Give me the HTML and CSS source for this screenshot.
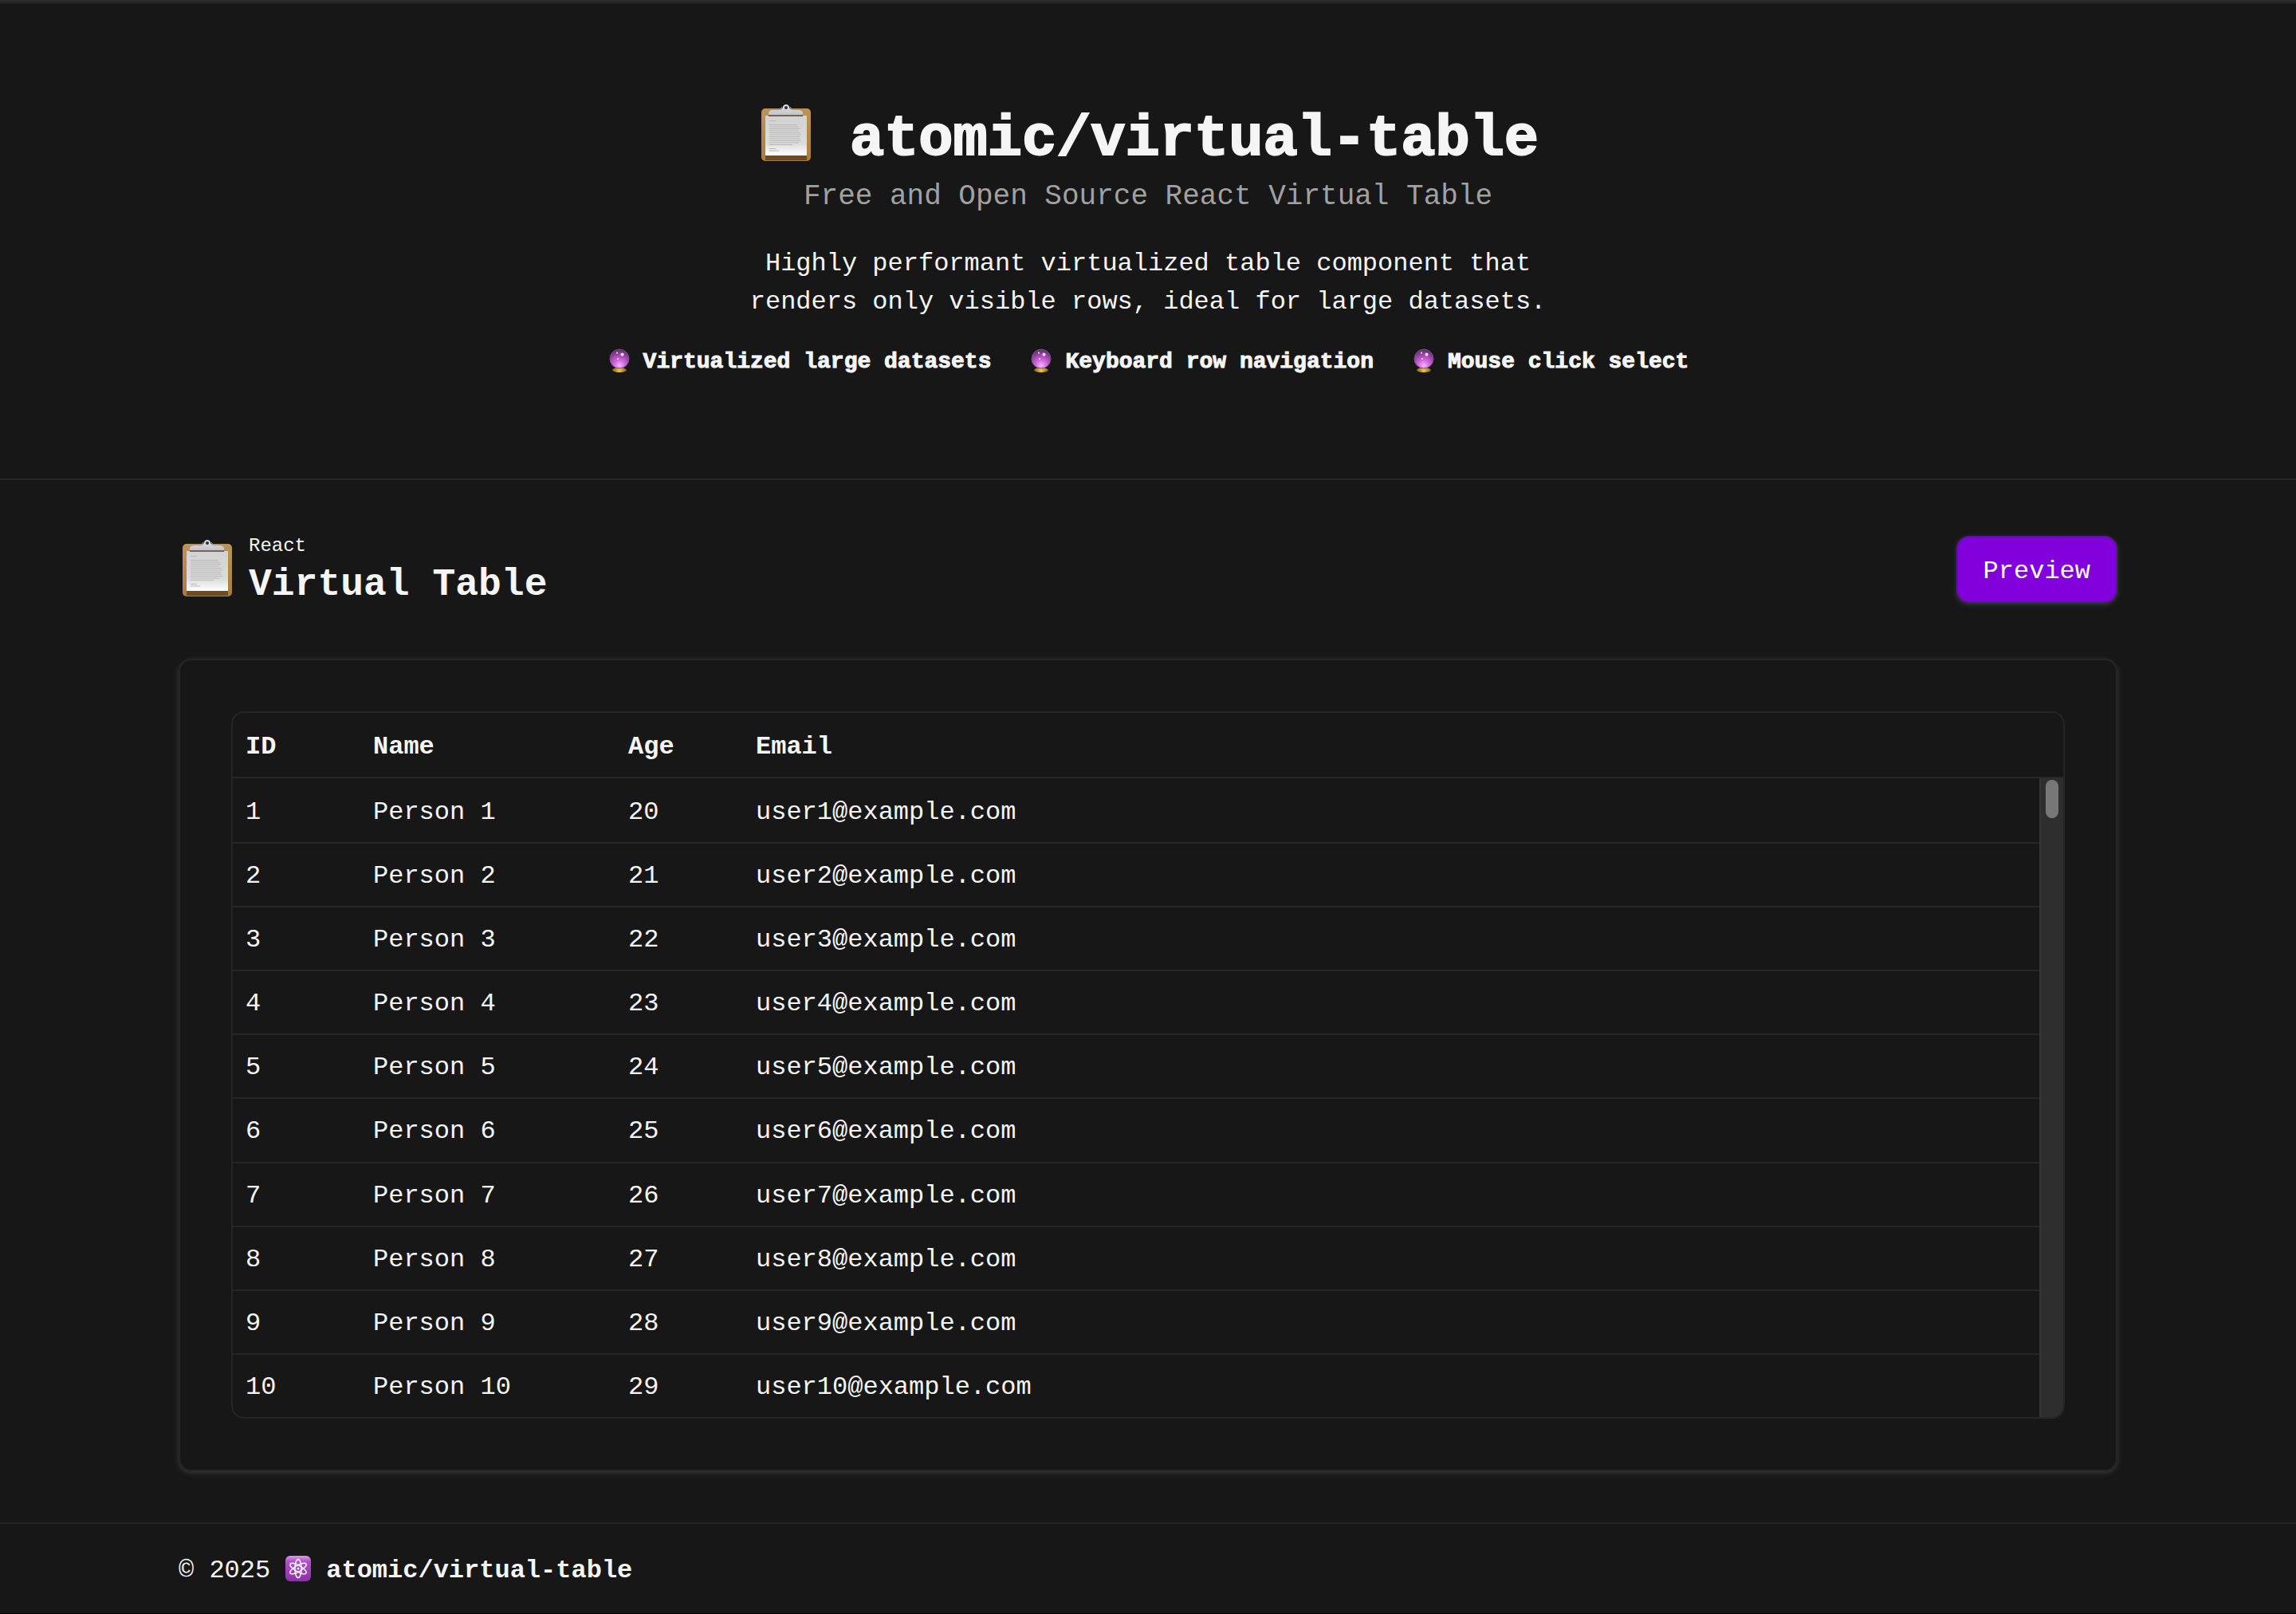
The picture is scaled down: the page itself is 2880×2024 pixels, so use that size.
FILE: index.html
```html
<!DOCTYPE html>
<html lang="en">
<head>
<meta charset="utf-8">
<title>atomic/virtual-table</title>
<link rel="stylesheet" href="styles.css">
</head>
<body>
<svg class="defs" width="0" height="0" aria-hidden="true">
  <defs>
    <linearGradient id="board" x1="0" y1="0" x2="0" y2="1"><stop offset="0" stop-color="#bd9357"/><stop offset="1" stop-color="#a97c3e"/></linearGradient>
    <linearGradient id="paper" x1="0" y1="0" x2="0" y2="1"><stop offset="0" stop-color="#d2d2d2"/><stop offset="0.7" stop-color="#dcdcdc"/><stop offset="1" stop-color="#ffffff"/></linearGradient>
    <linearGradient id="clip" x1="0" y1="0" x2="0" y2="1"><stop offset="0" stop-color="#dfe3e8"/><stop offset="1" stop-color="#c2c4c7"/></linearGradient>
    <radialGradient id="ball" cx="0.5" cy="0.85" r="0.85"><stop offset="0" stop-color="#f6b4fb"/><stop offset="0.35" stop-color="#cf66dc"/><stop offset="0.75" stop-color="#8e3c9c"/><stop offset="1" stop-color="#5b2a66"/></radialGradient>
    <linearGradient id="gold" x1="0" y1="0" x2="1" y2="0"><stop offset="0" stop-color="#8a5d12"/><stop offset="0.5" stop-color="#f0c648"/><stop offset="1" stop-color="#8a5d12"/></linearGradient>
    <linearGradient id="tile" x1="0" y1="0" x2="0" y2="1"><stop offset="0" stop-color="#dd9cec"/><stop offset="0.22" stop-color="#b24fcb"/><stop offset="1" stop-color="#8d2fa9"/></linearGradient>
    <symbol id="clipboard" viewBox="0 0 72 80">
      <rect x="5" y="11" width="62" height="66" rx="5" fill="url(#board)"/>
      <path d="M10 70h52v6H10z" fill="#6f4b21"/>
      <path d="M10 20h52v50H10z" fill="url(#paper)"/>
      <g stroke="#b9b9b9" stroke-width="1"><path d="M15 26.500h8M15 31.500h35M15 34h37M15 36.500h38M15 39h36M15 41.500h39M15 44h40M15 46.500h38M15 49h39M15 51.500h40M15 54h37M15 56.500h29M15 61.500h8M15 64h12"/></g>
      <path d="M14 18h43v3H14z" fill="#74655c"/>
      <path d="M14 19v-2q0-4 6-4h8q3 0 4-4 1-3 4-3t4 3q1 4 4 4h7q6 0 6 4v2z" fill="url(#clip)"/>
      <path d="M26 13q4-1 5-4M46 13q-4-1-5-4" fill="none" stroke="#8ea9c9" stroke-width="1"/>
      <circle cx="36" cy="10" r="2" fill="#303236"/>
    </symbol>
    <symbol id="crystal" viewBox="0 0 28 32">
      <ellipse cx="15" cy="28" rx="9" ry="3" fill="url(#gold)"/>
      <circle cx="15" cy="14" r="12" fill="url(#ball)" stroke="#6f5578" stroke-width="1"/>
      <circle cx="18.500" cy="8.500" r="2" fill="#fff" opacity="0.9"/>
      <circle cx="12" cy="6.500" r="1" fill="#fff"/>
      <circle cx="13" cy="14" r="1" fill="#fbdcff"/>
    </symbol>
    <symbol id="atom" viewBox="0 0 32 32">
      <rect width="32" height="32" rx="6" fill="url(#tile)"/>
      <g fill="none" stroke="#fff" stroke-width="1.500"><ellipse cx="16" cy="16" rx="4" ry="11.500"/><ellipse cx="16" cy="16" rx="4" ry="11.500" transform="rotate(60 16 16)"/><ellipse cx="16" cy="16" rx="4" ry="11.500" transform="rotate(120 16 16)"/></g>
      <circle cx="16" cy="16" r="1.500" fill="#fff"/>
    </symbol>
  </defs>
</svg>

<header class="hero">
  <h1 class="hero-title"><svg class="icon-board" aria-hidden="true"><use href="#clipboard"/></svg> <span>atomic/virtual-table</span></h1>
  <p class="hero-subtitle">Free and Open Source React Virtual Table</p>
  <p class="hero-text">Highly performant virtualized table component that renders only visible rows, ideal for large datasets.</p>
  <ul class="features">
    <li class="feature"><svg class="icon-ball" aria-hidden="true"><use href="#crystal"/></svg>Virtualized large datasets</li>
    <li class="feature"><svg class="icon-ball" aria-hidden="true"><use href="#crystal"/></svg>Keyboard row navigation</li>
    <li class="feature"><svg class="icon-ball" aria-hidden="true"><use href="#crystal"/></svg>Mouse click select</li>
  </ul>
</header>

<main class="container">
  <div class="section-head">
    <svg class="icon-board" aria-hidden="true"><use href="#clipboard"/></svg>
    <div class="section-titles">
      <p class="section-kicker">React</p>
      <h2 class="section-title">Virtual Table</h2>
    </div>
    <button class="button" type="button">Preview</button>
  </div>

  <section class="card">
    <div class="table-frame">
      <table class="table">
        <thead class="table-head">
          <tr class="row"><th>ID</th><th>Name</th><th>Age</th><th>Email</th></tr>
        </thead>
        <tbody class="table-body">
          <tr class="row"><td>1</td><td>Person 1</td><td>20</td><td>user1@example.com</td></tr>
          <tr class="row"><td>2</td><td>Person 2</td><td>21</td><td>user2@example.com</td></tr>
          <tr class="row"><td>3</td><td>Person 3</td><td>22</td><td>user3@example.com</td></tr>
          <tr class="row"><td>4</td><td>Person 4</td><td>23</td><td>user4@example.com</td></tr>
          <tr class="row"><td>5</td><td>Person 5</td><td>24</td><td>user5@example.com</td></tr>
          <tr class="row"><td>6</td><td>Person 6</td><td>25</td><td>user6@example.com</td></tr>
          <tr class="row"><td>7</td><td>Person 7</td><td>26</td><td>user7@example.com</td></tr>
          <tr class="row"><td>8</td><td>Person 8</td><td>27</td><td>user8@example.com</td></tr>
          <tr class="row"><td>9</td><td>Person 9</td><td>28</td><td>user9@example.com</td></tr>
          <tr class="row"><td>10</td><td>Person 10</td><td>29</td><td>user10@example.com</td></tr>
        </tbody>
      </table>
      <div class="scrollbar"><div class="scrollbar-thumb"></div></div>
    </div>
  </section>
</main>

<footer class="footer">
  <div class="container footer-line">
    <span>© 2025</span>
    <svg class="icon-atom" aria-hidden="true"><use href="#atom"/></svg>
    <strong>atomic/virtual-table</strong>
  </div>
</footer>
</body>
</html>
```
FILE: styles.css
```css
* {
  box-sizing: border-box;
  margin: 0;
  padding: 0;
}

:root {
  --bg: #171717;
  --line: #262626;
  --text: #f5f5f5;
  --muted: #a1a1a1;
}

body {
  display: flex;
  flex-direction: column;
  min-height: 100vh;
  background: var(--bg);
  color: var(--text);
  font-family: "Liberation Mono", monospace;
  font-size: 32px;
  line-height: 48px;
  border-bottom: 1px solid #000;
}

.defs {
  position: absolute;
}

.container {
  width: 100%;
  max-width: 2560px;
  margin: 0 auto;
  padding: 0 64px;
}

.hero {
  display: flex;
  flex-direction: column;
  align-items: center;
  padding: 125px 64px 126px;
  text-align: center;
  border-bottom: 2px solid var(--line);
  background: linear-gradient(#323232, var(--bg) 6px);
}

.hero-title {
  display: flex;
  align-items: flex-end;
  gap: 44px;
  height: 94px;
  font-size: 72px;
  line-height: 88px;
  -webkit-text-stroke: 2px var(--text);
}

.icon-board {
  flex: none;
  width: 72px;
  height: 80px;
}

.hero-title .icon-board {
  align-self: flex-start;
}

.hero-subtitle {
  font-size: 36px;
  line-height: 56px;
  color: var(--muted);
}

.hero-text {
  max-width: 1024px;
  padding: 32px 0 31px;
}

.features {
  display: flex;
  flex-wrap: wrap;
  justify-content: center;
  gap: 16px 48px;
  list-style: none;
  font-size: 28px;
  line-height: 40px;
  font-weight: 700;
  -webkit-text-stroke: 1px var(--text);
}

.feature {
  display: flex;
  align-items: center;
  gap: 17px;
}

.icon-ball {
  width: 28px;
  height: 32px;
  margin-bottom: 4px;
}

.section-head {
  display: flex;
  align-items: center;
  gap: 16px;
  padding: 64px 0;
}

.section-head .icon-board {
  margin-bottom: 6px;
}

.section-titles {
  flex: 1;
}

.section-kicker {
  font-size: 24px;
  line-height: 38px;
}

.section-title {
  font-size: 48px;
  line-height: 58px;
}

.button {
  padding: 19px 32px 13px;
  border: 2px solid #5b1594;
  border-radius: 16px;
  background: #8200db;
  color: #fff;
  font: inherit;
  box-shadow: 0 2px 6px #3a3a3a;
}

.card {
  padding: 64px;
  border: 2px solid var(--line);
  border-radius: 16px;
  box-shadow: 0 2px 6px #3a3a3a;
  margin-bottom: 64px;
}

.table-frame {
  display: grid;
  grid-template-columns: 1fr 30px;
  grid-template-rows: 82px 1fr;
  overflow: hidden;
  border: 2px solid var(--line);
  border-radius: 16px;
}

.table {
  grid-area: 1 / 1 / 3 / 3;
  display: grid;
  text-align: left;
}

.table-head,
.table-body {
  display: grid;
}

.table-body {
  min-height: 801px;
  padding-right: 30px;
}

.row {
  display: grid;
  grid-template-columns: 160px 320px 160px 1fr;
  border-bottom: 2px solid var(--line);
}

.row th,
.row td {
  padding: 19px 16px 13px;
}

.table-body .row:not(:first-child) td {
  padding: 17px 16px 13px;
}

.table-body .row:last-child {
  border-bottom: 0;
}

.scrollbar {
  grid-area: 2 / 2;
  padding: 2px 6px;
  border-left: 2px solid #363636;
  background: #2e2e2e;
}

.scrollbar-thumb {
  width: 16px;
  height: 48px;
  border-radius: 8px;
  background: #777;
}

.footer {
  flex: 1;
  border-top: 2px solid var(--line);
}

.footer-line {
  display: flex;
  align-items: center;
  gap: 19px;
  padding-top: 35px;
}

.icon-atom {
  width: 32px;
  height: 32px;
  margin-bottom: 6px;
}
```
